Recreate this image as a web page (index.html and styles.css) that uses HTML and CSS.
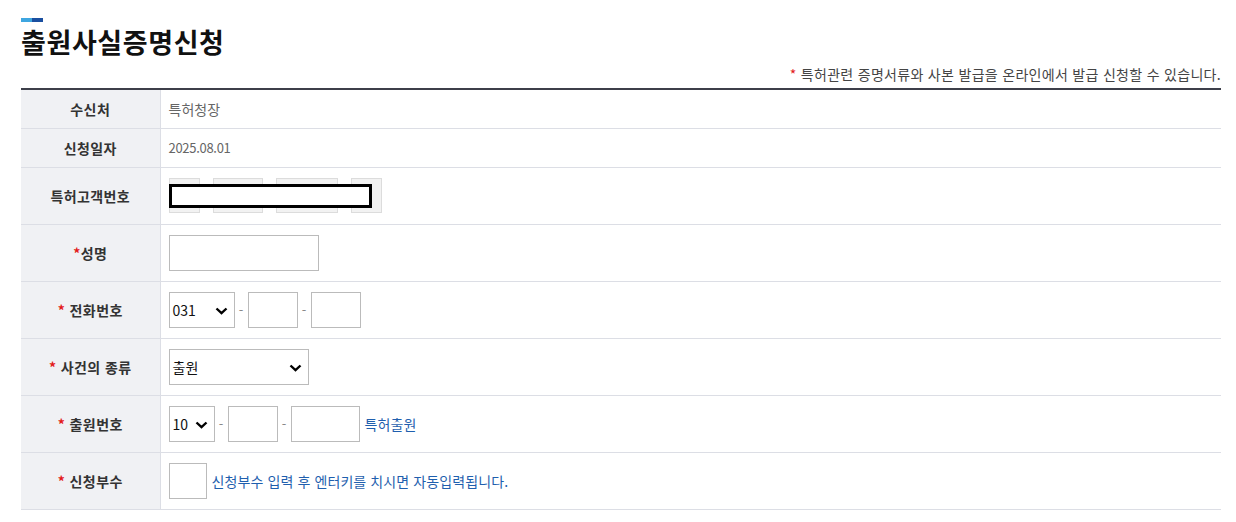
FILE: index.html
```html
<!DOCTYPE html>
<html lang="ko">
<head>
<meta charset="utf-8">
<link rel="stylesheet" href="styles.css">
</head>
<body>
<div class="page">
  <div class="title-bar"><span class="tb-light"></span><span class="tb-dark"></span></div>
  <h1 class="title">출원사실증명신청</h1>
  <p class="notice"><span class="req">*</span> 특허관련 증명서류와 사본 발급을 온라인에서 발급 신청할 수 있습니다.</p>
  <table class="form">
    <tr class="short">
      <th>수신처</th>
      <td class="val">특허청장</td>
    </tr>
    <tr class="short">
      <th>신청일자</th>
      <td class="val date">2025.08.01</td>
    </tr>
    <tr>
      <th>특허고객번호</th>
      <td>
        <div class="cust">
          <span class="dis w30"></span>
          <span class="dis w50"></span>
          <span class="dis w62"></span>
          <span class="dis w30"></span>
          <span class="redact"></span>
        </div>
      </td>
    </tr>
    <tr>
      <th><span class="req">*</span>성명</th>
      <td><input class="inp w150" type="text"></td>
    </tr>
    <tr>
      <th><span class="req">*</span> 전화번호</th>
      <td>
        <div class="line">
          <span class="sel w66"><span class="sel-text">031</span><svg class="chev" width="13" height="8" viewBox="0 0 13 8"><path d="M1.5 1.5 L6.5 6.2 L11.5 1.5" fill="none" stroke="#000" stroke-width="2.4"/></svg></span>
          <span class="dash">-</span>
          <input class="inp w50" type="text">
          <span class="dash">-</span>
          <input class="inp w50" type="text">
        </div>
      </td>
    </tr>
    <tr>
      <th><span class="req">*</span> 사건의 종류</th>
      <td>
        <span class="sel w140"><span class="sel-text">출원</span><svg class="chev" width="13" height="8" viewBox="0 0 13 8"><path d="M1.5 1.5 L6.5 6.2 L11.5 1.5" fill="none" stroke="#000" stroke-width="2.4"/></svg></span>
      </td>
    </tr>
    <tr>
      <th><span class="req">*</span> 출원번호</th>
      <td>
        <div class="line">
          <span class="sel w46"><span class="sel-text">10</span><svg class="chev" width="13" height="8" viewBox="0 0 13 8"><path d="M1.5 1.5 L6.5 6.2 L11.5 1.5" fill="none" stroke="#000" stroke-width="2.4"/></svg></span>
          <span class="dash">-</span>
          <input class="inp w50" type="text">
          <span class="dash">-</span>
          <input class="inp w69" type="text">
          <span class="hint">특허출원</span>
        </div>
      </td>
    </tr>
    <tr>
      <th><span class="req">*</span> 신청부수</th>
      <td>
        <div class="line">
          <input class="inp w38" type="text">
          <span class="hint">신청부수 입력 후 엔터키를 치시면 자동입력됩니다.</span>
        </div>
      </td>
    </tr>
  </table>
</div>
</body>
</html>
```

FILE: styles.css
```css
* { box-sizing: border-box; }
html, body { margin: 0; padding: 0; background: #fff; }
body {
  font-family: "Noto Sans CJK KR", "Noto Sans", sans-serif;
  color: #333;
}
.page {
  width: 1200px;
  margin-left: 21px;
  padding-top: 18px;
}
.title-bar { display: flex; height: 4px; }
.tb-light { width: 11px; background: #3ea6e0; }
.tb-dark { width: 11px; background: #1a4fa0; }
.title {
  margin: 2px 0 0;
  font-size: 27px;
  line-height: 36px;
  font-weight: 700;
  color: #111;
  letter-spacing: 0.6px;
}
.notice {
  margin: 5px 0 4px;
  text-align: right;
  font-size: 14px;
  line-height: 19px;
  color: #444;
  letter-spacing: 0.3px;
}
.req { color: #e31b1b; }
.form {
  width: 1200px;
  border-collapse: collapse;
  border-top: 2px solid #3d3f4a;
}
.form th {
  width: 139px;
  background: #f0f1f4;
  border-bottom: 1px solid #dcdee5;
  border-right: 1px solid #dcdee5;
  font-size: 14px;
  font-weight: 700;
  color: #333;
  text-align: center;
  height: 57px;
  padding: 0;
  letter-spacing: 0.4px;
}
.form td {
  border-bottom: 1px solid #dcdee5;
  padding: 0 8px;
  height: 57px;
  font-size: 14px;
}
.form tr.short th, .form tr.short td { height: 39px; }
.val { color: #666; }
.val.date { font-size: 13px; letter-spacing: -0.3px; }
.cust {
  position: relative;
  display: flex;
  gap: 13px;
  align-items: center;
}
.dis {
  display: block;
  height: 35px;
  background: #f2f2f2;
  border: 1px solid #dcdcdc;
}
.dis.w30 { width: 31px; }
.dis.w50 { width: 50px; }
.dis.w62 { width: 62px; }
.redact {
  position: absolute;
  left: 0;
  top: 6px;
  width: 203px;
  height: 24px;
  border: 3px solid #000;
  background: #fff;
}
.line { display: flex; align-items: center; }
.inp {
  display: block;
  height: 36px;
  border: 1px solid #bbb;
  background: #fff;
  margin: 0;
  padding: 0 4px;
  font: inherit;
}
.w150 { width: 150px; }
.w50 { width: 50px; }
.w69 { width: 69px; }
.w38 { width: 38px; }
.sel {
  position: relative;
  display: flex;
  align-items: center;
  height: 36px;
  border: 1px solid #bbb;
  background: #fff;
  padding-left: 3px;
  font-size: 14px;
  color: #111;
}
.w66 { width: 66px; }
.w46 { width: 46px; }
.w140 { width: 140px; }
.chev { position: absolute; right: 6px; top: 14px; }
.dash {
  width: 13px;
  text-align: center;
  color: #888;
  font-size: 13px;
}
.hint {
  margin-left: 5px;
  color: #1f5fae;
  font-size: 14px;
  letter-spacing: 0.1px;
}
```
